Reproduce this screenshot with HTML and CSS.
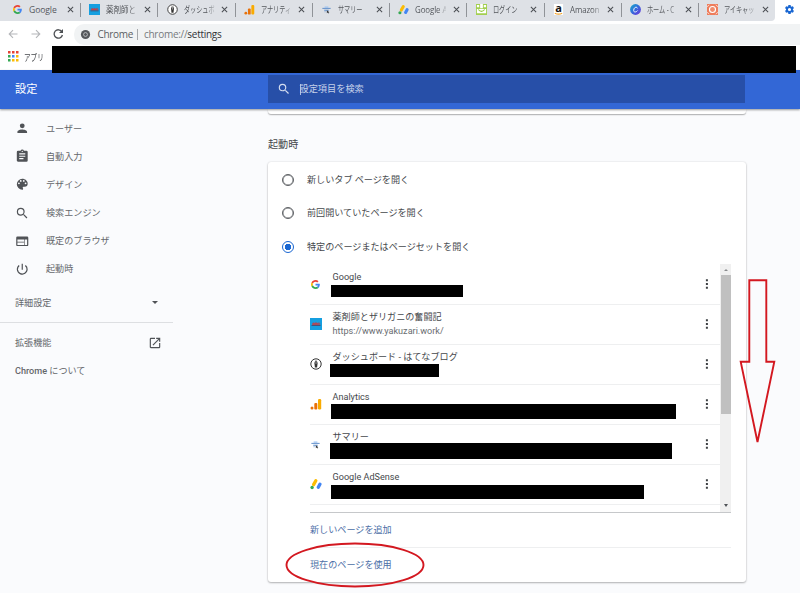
FILE: index.html
```
<!DOCTYPE html>
<html lang="ja">
<head>
<meta charset="utf-8">
<title>設定</title>
<link rel="stylesheet" href="styles.css">
</head>
<body>
<svg class="defs" aria-hidden="true">
  <symbol id="google" viewBox="0 0 48 48"><path fill="#ea4335" d="M24 9.500c3.540 0 6.710 1.220 9.210 3.600l6.850-6.850C35.900 2.380 30.470 0 24 0 14.620 0 6.510 5.380 2.560 13.220l7.980 6.190C12.430 13.720 17.740 9.500 24 9.500z"/><path fill="#4285f4" d="M46.980 24.550c0-1.570-.15-3.090-.38-4.550H24v9.020h12.940c-.58 2.960-2.260 5.480-4.780 7.180l7.730 6c4.510-4.180 7.090-10.360 7.090-17.650z"/><path fill="#fbbc05" d="M10.530 28.590c-.48-1.450-.76-2.990-.76-4.590s.27-3.140.76-4.590l-7.980-6.190C.92 16.460 0 20.120 0 24c0 3.880.92 7.540 2.560 10.780z"/><path fill="#34a853" d="M24 48c6.480 0 11.930-2.130 15.890-5.810l-7.730-6c-2.150 1.450-4.920 2.300-8.160 2.300-6.260 0-11.570-4.220-13.470-9.910l-7.980 6.190C6.510 42.620 14.620 48 24 48z"/></symbol>
  <symbol id="crayfish" viewBox="0 0 12 12"><path fill="#159fe0" d="M0 0h12v12H0z"/><path fill="#8d5a74" d="M2 5.500l1.500-1.300 1 .8L6 4l1.300 1L9 4.200l1.200 1.300v1.700H2z"/><path stroke="#4b3b57" stroke-width=".7" d="M1.500 7.500h9"/><path stroke="#e03535" stroke-width=".8" d="M3 6h5"/></symbol>
  <symbol id="hatena" viewBox="0 0 12 12"><circle cx="6" cy="6" r="5.200" fill="#fff" stroke="#333" stroke-width="1"/><path fill="#333" d="M5.300 2.500h1.400l.9 2.500-.5 4.500H4.900L4.400 5z"/><path stroke="#fff" stroke-width=".5" d="M6 2v4"/></symbol>
  <symbol id="analytics" viewBox="0 0 12 12"><rect x="8" y="1" width="3.200" height="10.500" rx="1.200" fill="#f9ab00"/><rect x="4.300" y="5" width="3" height="6.500" rx="1" fill="#e8710a"/><circle cx="2" cy="10" r="1.500" fill="#e8710a"/></symbol>
  <symbol id="summary" viewBox="0 0 12 12"><path d="M3.500 3.500V2h5v1.500" fill="#9bc3f4"/><path stroke="#5d8cc8" stroke-width="1.300" d="M.5 4.500h11M3 7h6"/><path d="M6.500 7v4l1-1 1 1.300.8-.6-.8-1.200h1.300z" fill="#333"/><path stroke="#9bb4d4" d="M3 9h3"/></symbol>
  <symbol id="adsense" viewBox="0 0 12 12"><path stroke="#fbbc04" stroke-width="3.300" stroke-linecap="round" d="M5.800 2.700L3.600 6.600"/><circle cx="2.100" cy="9.500" r="1.700" fill="#34a853"/><path stroke="#4285f4" stroke-width="3.300" stroke-linecap="round" d="M9.900 6.200L8.300 9.200"/></symbol>
  <symbol id="login" viewBox="0 0 12 12"><path fill="#a3cf50" d="M0 0h12v12H0z"/><path fill="#fff" d="M1 1h2.500v2.500H1zm7.500 0H11v2.500H8.500zM4.500 0h3v4.500h-3zM1 5.500h10V10H1z"/><path fill="none" stroke="#94c83d" stroke-width="1.200" d="M2.500 6q3.500 4 7 0"/></symbol>
  <symbol id="amazon" viewBox="0 0 12 12"><path fill="#fff" d="M1 0h10v12H1z"/><text x="6" y="8.500" text-anchor="middle" class="amazon-a">a</text><path fill="none" stroke="#f4a52d" stroke-width="1.200" d="M2 10q4 2.200 8 0"/></symbol>
  <symbol id="canva" viewBox="0 0 12 12"><defs><linearGradient id="cg" x1="0" y1="0" x2="1" y2="1"><stop stop-color="#12aec8"/><stop offset=".5" stop-color="#3568dc"/><stop offset="1" stop-color="#7134d8"/></linearGradient></defs><circle cx="6" cy="6" r="5.900" fill="url(#cg)"/><path fill="none" stroke="#fff" stroke-linecap="round" d="M8 4.300C7.500 2.500 4 3.500 4 7c0 2.500 3 2 4 .5"/></symbol>
  <symbol id="eyecatch" viewBox="0 0 12 12"><path fill="#ee7d5c" d="M0 0h12v12H0z"/><circle cx="6" cy="6" r="3.300" fill="#f08c6d" stroke="#fff" stroke-width="1.200"/><path stroke="#fff" stroke-width=".7" d="M0 3l2.500-2M12 3L9.500 1M0 9l2.500 2M12 9l-2.500 2"/></symbol>
  <symbol id="close" viewBox="0 0 8 8"><path stroke="#4a4d52" stroke-width="1.150" d="M1 1l6 6M7 1L1 7"/></symbol>
  <symbol id="gear" viewBox="0 0 24 24"><path fill="#1a67d2" d="M19.430 12.980c.04-.32.070-.64.070-.98s-.03-.66-.07-.98l2.110-1.650c.19-.15.240-.42.120-.64l-2-3.460c-.12-.22-.39-.3-.61-.22l-2.490 1c-.52-.4-1.080-.73-1.690-.98l-.38-2.650C14.460 2.180 14.250 2 14 2h-4c-.25 0-.46.180-.49.420l-.38 2.650c-.61.250-1.170.590-1.690.980l-2.490-1c-.23-.09-.49 0-.61.220l-2 3.460c-.13.220-.07.490.12.640l2.110 1.650c-.04.320-.07.650-.07.980s.030.660.070.980l-2.110 1.650c-.19.150-.24.420-.12.640l2 3.460c.12.220.39.300.61.220l2.490-1c.52.400 1.080.730 1.690.980l.38 2.650c.03.240.240.420.490.420h4c.25 0 .46-.18.490-.42l.38-2.650c.61-.25 1.170-.59 1.690-.98l2.490 1c.23.090.49 0 .61-.22l2-3.460c.12-.22.070-.49-.12-.64zM12 15.500a3.500 3.500 0 110-7 3.500 3.500 0 010 7z"/></symbol>
  <symbol id="search" viewBox="0 0 24 24"><path fill="currentColor" d="M15.500 14h-.79l-.28-.27A6.470 6.470 0 0016 9.500 6.500 6.500 0 109.500 16c1.610 0 3.090-.59 4.230-1.570l.27.280v.79l5 4.990L20.490 19zm-6 0a4.500 4.500 0 110-9 4.500 4.500 0 010 9z"/></symbol>
  <symbol id="person" viewBox="0 0 24 24"><path fill="currentColor" d="M12 12a4 4 0 100-8 4 4 0 000 8zm0 2c-2.670 0-8 1.340-8 4v2h16v-2c0-2.660-5.330-4-8-4z"/></symbol>
  <symbol id="clip" viewBox="0 0 24 24"><path fill="currentColor" d="M19 3h-4.180a3 3 0 00-5.640 0H5a2 2 0 00-2 2v14c0 1.100.9 2 2 2h14a2 2 0 002-2V5a2 2 0 00-2-2zm-7 0a1 1 0 110 2 1 1 0 010-2zm2 14H7v-2h7zm3-4H7v-2h10zm0-4H7V7h10z"/></symbol>
  <symbol id="palette" viewBox="0 0 24 24"><path fill="currentColor" d="M12 3a9 9 0 000 18 1.500 1.500 0 001.100-2.500c-.23-.26-.37-.61-.37-1a1.500 1.500 0 011.500-1.500H16a5 5 0 005-5c0-4.420-4.030-8-9-8zm-5.500 9a1.500 1.500 0 110-3 1.500 1.500 0 010 3zm3-4a1.500 1.500 0 110-3 1.500 1.500 0 010 3zm5 0a1.500 1.500 0 110-3 1.500 1.500 0 010 3zm3 4a1.500 1.500 0 110-3 1.500 1.500 0 010 3z"/></symbol>
  <symbol id="web" viewBox="0 0 24 24"><path fill="currentColor" d="M20 4H4a2 2 0 00-2 2v12c0 1.100.9 2 2 2h16a2 2 0 002-2V6a2 2 0 00-2-2zm-5 14H4v-4h11zm0-5H4V9h11zm5 5h-4V9h4z"/></symbol>
  <symbol id="power" viewBox="0 0 24 24"><path fill="currentColor" d="M13 3h-2v10h2zm4.830 2.170l-1.420 1.420A6.920 6.920 0 0119 12a7 7 0 11-11.420-5.420L6.170 5.170A9 9 0 1021 12a8.940 8.940 0 00-3.170-6.830z"/></symbol>
  <symbol id="external" viewBox="0 0 24 24"><path fill="currentColor" d="M19 19H5V5h7V3H5a2 2 0 00-2 2v14c0 1.100.9 2 2 2h14a2 2 0 002-2v-7h-2zM14 3v2h3.590l-9.830 9.830 1.410 1.410L19 6.410V10h2V3z"/></symbol>
  <symbol id="more" viewBox="0 0 4 12"><path fill="#3c4043" d="M.9 1.200h2v2h-2zm0 3.800h2v2h-2zm0 3.800h2v2h-2z"/></symbol>
</svg>

<div class="tabbar">
  <div class="tabs">
    <div class="tab"><svg class="fav"><use href="#google"/></svg><span class="name">Google</span><svg class="x"><use href="#close"/></svg></div>
    <div class="tab"><svg class="fav"><use href="#crayfish"/></svg><span class="name fade"><b class="kanji">薬剤師と</b></span><svg class="x"><use href="#close"/></svg></div>
    <div class="tab"><svg class="fav"><use href="#hatena"/></svg><span class="name fade"><b>ダッシュボ</b></span><svg class="x"><use href="#close"/></svg></div>
    <div class="tab"><svg class="fav"><use href="#analytics"/></svg><span class="name fade"><b>アナリティ</b></span><svg class="x"><use href="#close"/></svg></div>
    <div class="tab"><svg class="fav small"><use href="#summary"/></svg><span class="name"><b>サマリー</b></span><svg class="x"><use href="#close"/></svg></div>
    <div class="tab"><svg class="fav"><use href="#adsense"/></svg><span class="name fade"><b class="latin">Google A</b></span><svg class="x"><use href="#close"/></svg></div>
    <div class="tab"><svg class="fav"><use href="#login"/></svg><span class="name"><b>ログイン</b></span><svg class="x"><use href="#close"/></svg></div>
    <div class="tab"><svg class="fav"><use href="#amazon"/></svg><span class="name fade"><b class="latin">Amazon</b></span><svg class="x"><use href="#close"/></svg></div>
    <div class="tab"><svg class="fav"><use href="#canva"/></svg><span class="name fade"><b>ホーム - C</b></span><svg class="x"><use href="#close"/></svg></div>
    <div class="tab"><svg class="fav"><use href="#eyecatch"/></svg><span class="name fade"><b>アイキャッ</b></span><svg class="x"><use href="#close"/></svg></div>
  </div>
  <svg class="gear"><use href="#gear"/></svg>
</div>

<div class="toolbar">
  <svg class="nav" viewBox="0 0 70 20"><g fill="none" stroke="#b4b6b9" stroke-width="1.100"><path d="M17.500 10H9.500M13 6.200L9.200 10l3.800 3.800M31.500 10h8M36 6.200l3.800 3.800-3.800 3.800"/></g><path fill="none" stroke="#4b4e52" stroke-width="1.300" d="M61.800 7.600a4.200 4.200 0 10.600 3.400"/><path fill="#4b4e52" d="M63 5v4h-4z"/></svg>
  <div class="omnibox">
    <svg class="chrome" viewBox="0 0 12 12"><circle cx="6" cy="6" r="5" fill="#55585c"/><circle cx="6" cy="6" r="2.100" fill="#55585c" stroke="#d5d7d9" stroke-width=".8"/></svg>
    <span class="origin">Chrome</span><span class="sep"></span><span class="url">chrome://<em>settings</em></span>
  </div>
</div>
<div class="bookmarks">
  <svg class="apps" viewBox="0 0 11 11"><path fill="#e54335" d="M0 0h2.500v2.500H0zm4 0h2.500v2.500H4zm4 0h2.500v2.500H8z"/><path fill="#34a853" d="M0 4h2.500v2.500H0zm0 4h2.500v2.500H0z"/><path fill="#4285f4" d="M4 4h2.500v2.500H4z"/><path fill="#fbbc04" d="M8 4h2.500v2.500H8zM4 8h2.500v2.500H4zm4 0h2.500v2.500H8z"/></svg>
  <span class="apps-label">アプリ</span>
  <div class="bookmark-mask"></div>
</div>

<header class="header">
  <h1>設定</h1>
  <div class="searchbox"><svg><use href="#search"/></svg><span class="caret"></span><span>設定項目を検索</span></div>
</header>

<div class="page">
  <nav class="side">
    <a><svg><use href="#person"/></svg>ユーザー</a>
    <a><svg><use href="#clip"/></svg>自動入力</a>
    <a><svg><use href="#palette"/></svg>デザイン</a>
    <a><svg><use href="#search"/></svg>検索エンジン</a>
    <a><svg><use href="#web"/></svg>既定のブラウザ</a>
    <a><svg><use href="#power"/></svg>起動時</a>
    <div class="advanced"><span>詳細設定</span><i class="down"></i></div>
    <div class="extra"><span>拡張機能</span><svg><use href="#external"/></svg></div>
    <div class="about"><span><strong>Chrome</strong> について</span></div>
  </nav>
  <main class="main">
    <div class="previous-card"></div>
    <h2>起動時</h2>
    <section class="card">
      <label class="option"><i class="radio"></i>新しいタブ ページを開く</label>
      <label class="option"><i class="radio"></i>前回開いていたページを開く</label>
      <label class="option"><i class="radio on"></i>特定のページまたはページセットを開く</label>
      <div class="list">
        <div class="rows">
          <div class="row"><svg class="site g"><use href="#google"/></svg><div class="text"><p>Google</p><div class="mask m1"></div></div><svg class="more"><use href="#more"/></svg></div>
          <div class="row"><svg class="site"><use href="#crayfish"/></svg><div class="text"><p>薬剤師とザリガニの奮闘記</p><p class="address">https://www.yakuzari.work/</p></div><svg class="more"><use href="#more"/></svg></div>
          <div class="row"><svg class="site"><use href="#hatena"/></svg><div class="text"><p>ダッシュボード - はてなブログ</p><div class="mask m3"></div></div><svg class="more"><use href="#more"/></svg></div>
          <div class="row"><svg class="site"><use href="#analytics"/></svg><div class="text"><p>Analytics</p><div class="mask m4"></div></div><svg class="more"><use href="#more"/></svg></div>
          <div class="row"><svg class="site g"><use href="#summary"/></svg><div class="text"><p>サマリー</p><div class="mask m5"></div></div><svg class="more"><use href="#more"/></svg></div>
          <div class="row"><svg class="site"><use href="#adsense"/></svg><div class="text"><p>Google AdSense</p><div class="mask m6"></div></div><svg class="more"><use href="#more"/></svg></div>
        </div>
        <div class="scroll"><i class="up"></i><div class="thumb"></div><i class="down"></i></div>
      </div>
      <a class="action first">新しいページを追加</a>
      <a class="action">現在のページを使用</a>
    </section>
  </main>
</div>
<svg class="annotations" viewBox="0 0 800 593"><g fill="none" stroke="#d31820" stroke-width="1.900"><path d="M749.300 280.300h17v81.500h8L757.500 442l-16.800-80.200h8.600z"/><ellipse cx="355" cy="565" rx="68.500" ry="21.500"/></g></svg>
</body>
</html>
```
FILE: styles.css
```
* { box-sizing: border-box; }
body { margin: 0; width: 800px; height: 593px; overflow: hidden; background: #fafbfd; color: #45484c; font: 9.1px/14px Roboto, "Noto Sans CJK JP", sans-serif; }
h1, h2, p { margin: 0; font-weight: 400; }
svg { display: block; flex: none; }
.defs { position: absolute; width: 0; height: 0; }
.amazon-a { font: bold 12px "Open Sans", sans-serif; fill: #111; }

.tabbar { display: flex; height: 21px; background: #fff; }
.tabs { display: flex; width: 775px; padding-left: 4px; background: #dee1e6; border-bottom-right-radius: 4px; }
.tab { display: flex; align-items: center; width: 77.250px; height: 19px; flex: none; padding-left: 8px; }
.tab:not(:last-child)::after { content: ""; width: 1px; height: 14px; margin-left: 6.500px; background: #909398; }
.fav { width: 11px; height: 11px; }
.tab:first-child .fav { width: 9px; height: 9px; margin: 0 1px; }
.fav.small { width: 9px; height: 9px; margin: 0 1px; }
.name { width: 31px; margin: 1px 6.500px 0 6px; white-space: nowrap; font: 8.600px/14px "Open Sans", "Noto Sans CJK JP", sans-serif; letter-spacing: -.1px; color: #55585d; }
.name b { display: inline-block; font-weight: 400; transform: scaleX(.72); transform-origin: left; }
.name b.kanji { transform: scaleX(.88); }
.name b.latin { transform: scaleX(.92); }
.name.fade { -webkit-mask-image: linear-gradient(90deg, #000 72%, #0003); mask-image: linear-gradient(90deg, #000 72%, #0003); }
.x { width: 7px; height: 7px; }
.gear { width: 11px; height: 11px; margin: 4px 0 0 9px; }

.toolbar { display: flex; height: 24px; padding-top: 3px; background: #fff; }
.nav { width: 70px; height: 20px; }
.omnibox { display: flex; align-items: center; width: 740px; height: 21px; margin-left: 4px; padding: 0 0 1px 6px; background: #f1f3f4; border-radius: 10px 0 0 10px; font: 10px/14px "Open Sans", sans-serif; color: #5b5e63; white-space: nowrap; }
.omnibox { width: auto; flex: 1; }
.chrome { width: 11px; height: 11px; }
.origin { width: 34px; margin-left: 6.500px; letter-spacing: -.3px; }
.sep { width: 1px; height: 11px; margin: 0 6px 0 5.500px; background: #a5a8ab; }
.url { letter-spacing: -.28px; color: #777a7e; }
.url em { font-style: normal; color: #303236; }
.bookmarks { position: relative; display: flex; align-items: center; height: 25px; padding-left: 8px; background: #fff; }
.apps { width: 11px; height: 11px; margin-top: -2px; }
.apps-label { width: 20px; margin-left: 5px; font: 8.900px/14px "Noto Sans CJK JP", sans-serif; white-space: nowrap; transform: scaleX(.74); transform-origin: left; }
.bookmark-mask { position: absolute; z-index: 3; left: 52px; top: .5px; width: 744px; height: 27.500px; background: #000; }

.header { position: relative; z-index: 2; display: flex; height: 39px; padding: 5px 0 0 15px; background: #3367d6; box-shadow: 0 1px 2px #0006; color: #fff; }
.header h1 { width: 253px; padding-top: 1px; font-size: 11.200px; line-height: 27px; }
.searchbox { display: flex; align-items: center; width: 477px; height: 28px; padding-left: 8.500px; background: #274fa8; color: #c5d1ea; font-size: 9.200px; }
.searchbox svg { width: 14px; height: 14px; color: #d5def0; }
.caret { width: 1px; height: 11px; margin-left: 9px; background: #afbfe2; }
.searchbox span:last-child { margin-left: -1px; }

.page { display: flex; height: 484px; }
.side { width: 268px; padding-top: 5.500px; color: #64676b; }
.side a { display: flex; align-items: center; height: 28.100px; padding-left: 14.500px; }
.side svg { width: 14.500px; height: 14.500px; margin-right: 17px; color: #505357; }
.advanced { display: flex; align-items: center; justify-content: space-between; width: 173px; height: 40px; padding: 0 15px; border-bottom: 1px solid #dddfe2; }
.down { border: 3.500px solid transparent; border-top-color: #505357; border-bottom: 0; }
.extra { display: flex; align-items: center; justify-content: space-between; width: 173px; height: 28px; margin-top: 6px; padding: 0 11px 0 15px; }
.side .extra svg { width: 14px; height: 14px; margin: 0; }
.about { display: flex; align-items: center; height: 28px; padding-left: 15px; }
.about strong { font-weight: 500; }

.main { width: 478px; }
.previous-card { width: 477.500px; height: 5px; background: #fff; border-radius: 0 0 3px 3px; box-shadow: 0 1px 1px #0003, 0 1px 2px #0002; }
.main h2 { height: 48px; padding-top: 22.500px; font-size: 10.100px; line-height: 15px; color: #44474b; }
.card { width: 477.500px; height: 420px; padding-top: 1px; background: #fff; border-radius: 3px; box-shadow: 0 1px 2px #0004, 0 0 2px #0002; }
.option { display: flex; align-items: center; height: 33.600px; padding-left: 13.500px; }
.radio { width: 12px; height: 12px; margin-right: 13.500px; border: 1.500px solid #5d6064; border-radius: 50%; box-shadow: inset 0 0 0 .4px #5d6064; }
.radio.on { border-color: #1a67d2; box-shadow: none; background: radial-gradient(circle, #1a67d2 0 3px, #fff 3.500px); }
.list { display: flex; width: 421px; height: 249px; margin-left: 42px; border-bottom: 1px solid #c6c8ca; }
.rows { width: 410px; padding-top: .8px; }
.row { display: flex; align-items: center; height: 40.050px; padding-right: 11px; border-bottom: 1px solid #eeeff0; }
.site { width: 12px; height: 12px; }
.site.g { width: 9px; height: 9px; margin: 0 2px 0 1px; }
.text { flex: 1; height: 40px; padding: 6px 0 0 10.500px; }
.text p { line-height: 14px; white-space: nowrap; }
.text .address { color: #696c70; }
.more { width: 4px; height: 12px; }
.mask { height: 15px; background: #000; }
.m1 { width: 132px; height: 12px; margin: 1px 0 0 -2px; }
.m3 { width: 109px; height: 13px; margin: 0 0 0 -3px; }
.m4 { width: 345px; margin: 0 0 0 -2px; }
.m5 { width: 342px; height: 16px; margin: -1.500px 0 0 -3px; }
.m6 { width: 313px; height: 14px; margin: .5px 0 0 -2px; }
.scroll { display: flex; flex-direction: column; align-items: center; width: 11px; background: #f0f0f0; }
.scroll .up { margin: 5px 0 4px; border: 2.500px solid transparent; border-bottom-color: #898b8d; border-top: 0; }
.thumb { width: 10px; height: 139px; background: #c0c0c0; }
.scroll .down { margin: auto 0 5px; border-width: 3px 2.500px 0; }
.action { display: flex; align-items: center; width: 421px; height: 34px; margin-left: 42px; color: #4b6ea6; }
.action.first { height: 35px; border-bottom: 1px solid #eeeff0; }
.annotations { position: absolute; z-index: 5; left: 0; top: 0; width: 800px; height: 593px; pointer-events: none; }
```
